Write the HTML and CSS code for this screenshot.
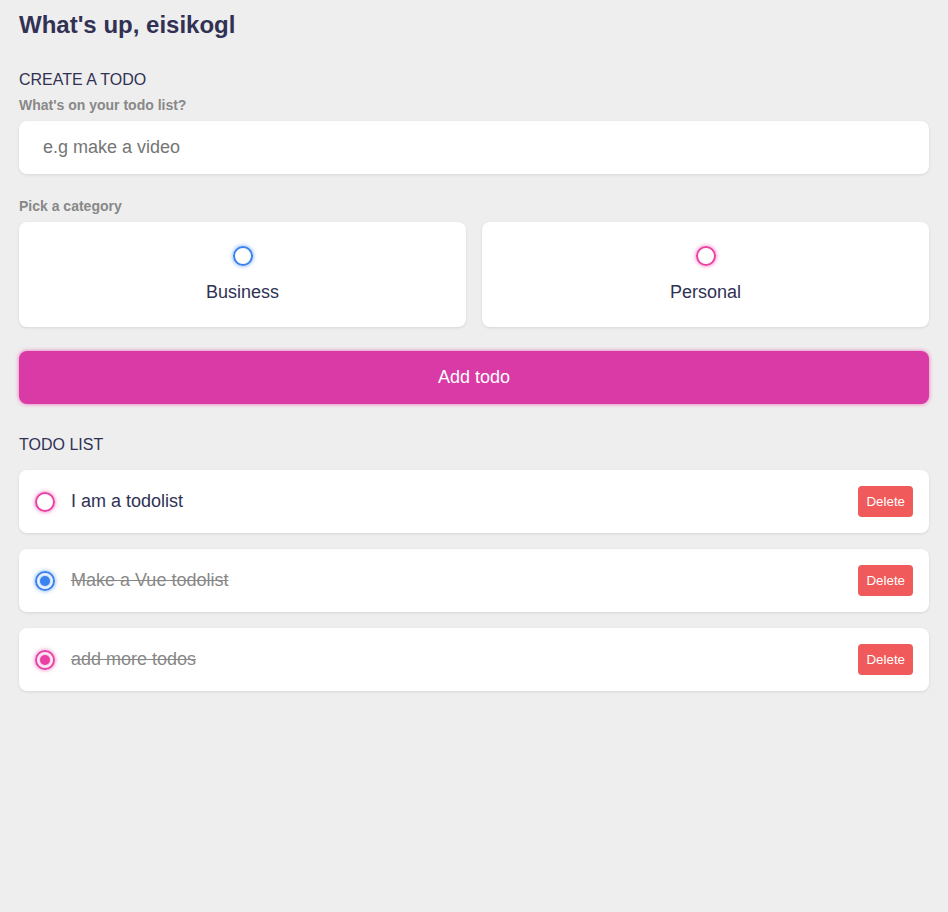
FILE: index.html
```html
<!DOCTYPE html>
<html lang="en">
<head>
<meta charset="utf-8">
<title>Vue Todo</title>
<link rel="stylesheet" href="styles.css">
</head>
<body>
<main class="app">
  <section class="greeting">
    <h2 class="title">What's up, eisikogl</h2>
  </section>

  <section class="create-todo">
    <h3>CREATE A TODO</h3>
    <form class="create-form" onsubmit="return false">
      <h4>What's on your todo list?</h4>
      <input class="todo-input" type="text" placeholder="e.g make a video" autofocus>

      <h4>Pick a category</h4>
      <div class="options">
        <label class="option">
          <span class="bubble business"></span>
          <span class="option-label">Business</span>
        </label>
        <label class="option">
          <span class="bubble personal"></span>
          <span class="option-label">Personal</span>
        </label>
      </div>

      <button class="add-btn" type="submit">Add todo</button>
    </form>
  </section>

  <section class="todo-list">
    <h3>TODO LIST</h3>
    <div class="list">
      <div class="todo-item">
        <span class="bubble personal"></span>
        <span class="todo-content">I am a todolist</span>
        <button class="delete" type="button">Delete</button>
      </div>
      <div class="todo-item done">
        <span class="bubble business checked"></span>
        <span class="todo-content">Make a Vue todolist</span>
        <button class="delete" type="button">Delete</button>
      </div>
      <div class="todo-item done">
        <span class="bubble personal checked"></span>
        <span class="todo-content">add more todos</span>
        <button class="delete" type="button">Delete</button>
      </div>
    </div>
  </section>
</main>
</body>
</html>
```

FILE: styles.css
```css
* {
  margin: 0;
  padding: 0;
  box-sizing: border-box;
  border: none;
  outline: none;
  background: none;
  font-family: "Liberation Sans", Arial, sans-serif;
}

body {
  background-color: #eeeeee;
  color: #313154;
}

.app {
  padding: 11px 19px 40px;
}

section {
  margin-bottom: 32px;
}

.greeting .title {
  color: #313154;
  font-size: 24px;
  font-weight: 700;
}

h3 {
  color: #313154;
  font-size: 16px;
  font-weight: 400;
  margin-bottom: 8px;
}

h4 {
  color: #888888;
  font-size: 14px;
  font-weight: 700;
  margin-bottom: 8px;
}

.todo-input {
  display: block;
  width: 100%;
  font-size: 18px;
  padding: 16px 24px;
  color: #313154;
  background-color: #ffffff;
  border-radius: 8px;
  box-shadow: 0 1px 3px rgba(0, 0, 0, 0.1);
  margin-bottom: 24px;
  caret-color: #313154;
}

.todo-input::placeholder {
  color: #757575;
}

.options {
  display: grid;
  grid-template-columns: repeat(2, 1fr);
  gap: 16px;
  margin-bottom: 24px;
}

.option {
  display: flex;
  flex-direction: column;
  align-items: center;
  justify-content: center;
  background-color: #ffffff;
  padding: 24px;
  border-radius: 8px;
  box-shadow: 0 1px 3px rgba(0, 0, 0, 0.1);
  cursor: pointer;
}

.option-label {
  color: #313154;
  font-size: 18px;
  margin-top: 16px;
}

.add-btn {
  display: block;
  width: 100%;
  font-size: 18px;
  padding: 16px 24px;
  color: #ffffff;
  background-color: #da3aa6;
  border-radius: 8px;
  box-shadow: 0 0 4px rgba(234, 64, 164, 0.75);
  cursor: pointer;
}

.bubble {
  display: flex;
  align-items: center;
  justify-content: center;
  flex: none;
  width: 20px;
  height: 20px;
  border-radius: 999px;
  border: 2px solid #3a82ee;
  box-shadow: 0 0 4px rgba(58, 130, 238, 0.75);
}

.bubble.personal {
  border-color: #ea40a4;
  box-shadow: 0 0 4px rgba(234, 64, 164, 0.75);
}

.bubble.checked::after {
  content: "";
  display: block;
  width: 10px;
  height: 10px;
  border-radius: 999px;
  background-color: #3a82ee;
  box-shadow: 0 0 4px rgba(58, 130, 238, 0.75);
}

.bubble.personal.checked::after {
  background-color: #ea40a4;
  box-shadow: 0 0 4px rgba(234, 64, 164, 0.75);
}

.list {
  margin-top: 16px;
}

.todo-item {
  display: flex;
  align-items: center;
  background-color: #ffffff;
  padding: 16px;
  border-radius: 8px;
  box-shadow: 0 1px 3px rgba(0, 0, 0, 0.1);
  margin-bottom: 16px;
}

.todo-item .bubble {
  margin-right: 16px;
}

.todo-content {
  flex: 1 1 0%;
  color: #313154;
  font-size: 18px;
}

.todo-item.done .todo-content {
  text-decoration: line-through;
  color: #888888;
}

.delete {
  display: block;
  padding: 8px;
  font-size: 13.33px;
  line-height: 15px;
  border-radius: 4px;
  color: #ffffff;
  background-color: #f05a5a;
  cursor: pointer;
}
```
